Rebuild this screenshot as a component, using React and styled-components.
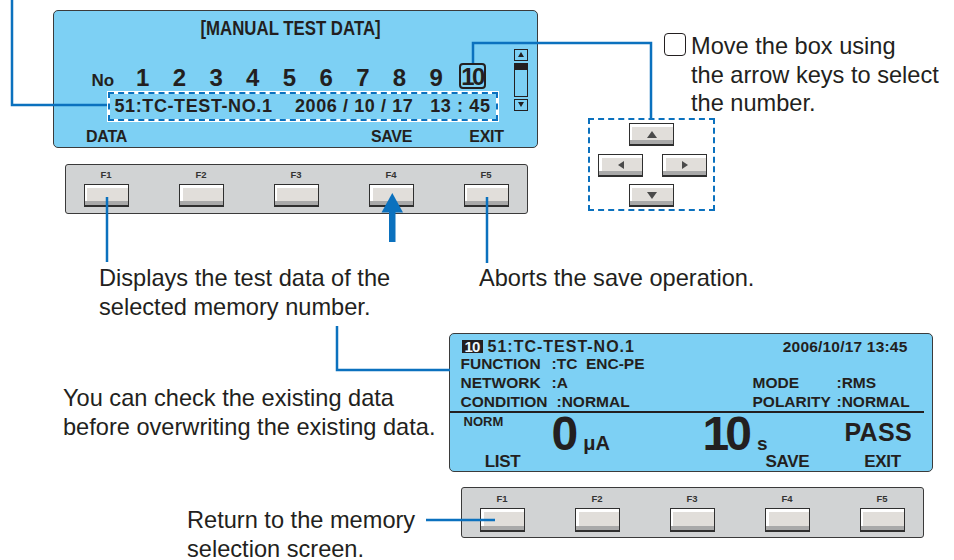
import React from 'react';
import styled, { createGlobalStyle } from 'styled-components';

const BLUE = '#0b71be';
const INK = '#231f20';
const LCD_BG = '#7dd0f4';

const GlobalStyle = createGlobalStyle`
  * { box-sizing: border-box; }
  body {
    margin: 0;
    background: #fff;
  }
`;

const Canvas = styled.div`
  position: relative;
  width: 954px;
  height: 560px;
  overflow: hidden;
  font-family: "Liberation Sans", Arial, sans-serif;
  color: ${INK};
`;

/* ---------- LCD screens ---------- */

const Lcd = styled.div`
  position: absolute;
  background: ${LCD_BG};
  border: 1.5px solid #3b3b3b;
  border-radius: 5px;
  font-weight: 700;
  display: flex;
  flex-direction: column;
`;

const SelectScreen = styled(Lcd)`
  left: 53px;
  top: 10px;
  width: 485px;
  height: 138px;
`;

const ScreenTitle = styled.div`
  height: 34px;
  display: flex;
  justify-content: center;
  padding-right: 10px;
`;

const Condensed = styled.span`
  display: inline-block;
  font-size: ${({ $size }) => $size}px;
  line-height: ${({ $line }) => $line}px;
  transform: scaleX(${({ $scale = 0.82 }) => $scale});
  white-space: pre;
`;

const ScreenBody = styled.div`
  display: flex;
  align-items: flex-start;
  margin-top: 3.5px;
`;

const SelectColumn = styled.div`
  width: 444.5px;
  margin-top: 14px;
`;

const NumberRow = styled.div`
  display: flex;
  height: 26px;
  padding-left: 37.5px;
`;

const NoLabel = styled.span`
  width: 21px;
  font-size: 17px;
  line-height: 36px;
  height: 26px;
`;

const DigitGrid = styled.div`
  display: grid;
  grid-template-columns: repeat(10, 36.7px);
  margin-left: 11.6px;
`;

const Digit = styled.span`
  height: 26px;
  line-height: 30px;
  font-size: 24px;
  text-align: center;
  letter-spacing: -0.5px;
`;

const SelectedDigit = styled.span`
  justify-self: center;
  width: 27px;
  height: 26px;
  border: 2px solid ${INK};
  border-radius: 4px;
  line-height: 23px;
  font-size: 24px;
  text-align: center;
  letter-spacing: -2.5px;
  padding-right: 2px;
`;

const DashedFrame = styled.div`
  margin: 2px 0 0 52.5px;
  width: 392px;
  height: 31px;
  background: #fff;
  padding: 1px;
`;

const DashedInner = styled.div`
  height: 100%;
  border: 2px dashed ${BLUE};
  background: ${LCD_BG};
  background-clip: padding-box;
  display: flex;
  align-items: center;
  justify-content: space-between;
  padding: 1px 5px 0 5px;
  font-size: 18px;
  letter-spacing: 0.6px;
  white-space: pre;
`;

const ScrollBar = styled.div`
  width: 14px;
  margin-left: 15px;
  display: flex;
  flex-direction: column;
  gap: 2px;
`;

const ScrollButton = styled.div`
  height: 12px;
  border: 1.5px solid ${INK};
  display: flex;
  align-items: center;
  justify-content: center;
`;

const ScrollTrack = styled.div`
  height: 34px;
  border: 1.5px solid ${INK};
  border-top-width: 7px;
`;

const Triangle = styled.span`
  width: 0;
  height: 0;
  border-style: solid;
  border-color: transparent;
  ${({ dir, size = 4, color = INK }) => {
    const h = size * 1.5;
    if (dir === 'up') return `border-width: 0 ${size}px ${h}px; border-bottom-color: ${color};`;
    if (dir === 'down') return `border-width: ${h}px ${size}px 0; border-top-color: ${color};`;
    if (dir === 'left') return `border-width: ${size}px ${h}px ${size}px 0; border-right-color: ${color};`;
    return `border-width: ${size}px 0 ${size}px ${h}px; border-left-color: ${color};`;
  }}
`;

const SoftLabels = styled.div`
  display: grid;
  grid-template-columns: repeat(5, 95px);
  margin: ${({ $top = 5 }) => $top}px 0 0 5px;
  line-height: ${({ $line = 20 }) => $line}px;
  font-size: ${({ $size = 16 }) => $size}px;
  letter-spacing: -0.3px;
`;

const SoftLabel = styled.span`
  text-align: center;
`;

/* ---------- memory data screen ---------- */

const DataScreen = styled(Lcd)`
  left: 449px;
  top: 333px;
  width: 484px;
  height: 139px;
  padding-top: 5.5px;
`;

const DataHeader = styled.div`
  display: flex;
  align-items: center;
  height: 14px;
  padding: 0 24.5px 0 11.5px;
  font-size: 15.5px;
`;

const MemoryBadge = styled.span`
  width: 21px;
  height: 13px;
  line-height: 14px;
  font-size: 15px;
  background: ${INK};
  color: #eef8fd;
  text-align: center;
  letter-spacing: -0.8px;
`;

const TestName = styled.span`
  margin-left: 5px;
  font-size: 16px;
  letter-spacing: 1px;
`;

const Stamp = styled.span`
  margin-left: auto;
  letter-spacing: 0.2px;
`;

const InfoGrid = styled.div`
  display: grid;
  grid-template-columns: 91px 201px 84px 1fr;
  padding-left: 10.5px;
  font-size: 15.5px;
  line-height: 19px;
  white-space: pre;
`;

const InfoValue = styled.span`
  margin-left: ${({ $shift = 0 }) => $shift}px;
`;

const Divider = styled.div`
  height: 2px;
  background: ${INK};
  margin-right: 8.5px;
`;

const MeasureRow = styled.div`
  display: grid;
  grid-template-columns: 88px 151px 142px auto;
  height: 42px;
  padding-left: 13.5px;
`;

const ModeTag = styled.span`
  align-self: start;
  margin-top: 1px;
  font-size: 13px;
  line-height: 16px;
`;

const Reading = styled.div`
  align-self: end;
  display: flex;
  align-items: baseline;
`;

const BigValue = styled.span`
  font-size: 48px;
  line-height: 36px;
  letter-spacing: ${({ $tight }) => ($tight ? '-4px' : '0')};
`;

const Unit = styled.span`
  font-size: ${({ $size = 20 }) => $size}px;
  margin-left: ${({ $gap = 5 }) => $gap}px;
`;

const Verdict = styled.span`
  align-self: start;
  margin-top: 6px;
  font-size: 25px;
  line-height: 26px;
  letter-spacing: 0.3px;
`;

/* ---------- function keys ---------- */

const KeyPanel = styled.div`
  position: absolute;
  left: ${({ $x }) => $x}px;
  top: ${({ $y }) => $y}px;
  width: 463px;
  height: ${({ $h }) => $h}px;
  background: #d1d3d4;
  border: 1.5px solid #3a3a3a;
  border-radius: 3px;
`;

const KeyRow = styled.div`
  display: grid;
  grid-template-columns: repeat(5, 95px);
  margin: 0 -7.5px;
`;

const KeyCell = styled.div`
  display: flex;
  flex-direction: column;
  align-items: center;
  padding-top: ${({ $pad }) => $pad}px;
`;

const KeyName = styled.span`
  font-size: 9.5px;
  font-weight: 700;
  line-height: 11px;
  color: #333;
`;

const Key = styled.div`
  width: 45px;
  height: ${({ $h = 23 }) => $h}px;
  margin-top: ${({ $gap = 0 }) => $gap}px;
  border: 1.5px solid #2f2f2f;
  border-bottom-width: 2px;
  background:
    linear-gradient(to right, #fff 2.5px, transparent 2.5px) top left / 100% calc(100% - 4px) no-repeat,
    linear-gradient(to bottom, #fff 0, #fff 3px, #e1deda 3px, #e1deda calc(100% - 4px), #a9a9a9 calc(100% - 4px));
  display: flex;
  align-items: center;
  justify-content: center;
`;

const ArrowPad = styled.div`
  position: absolute;
  left: 588px;
  top: 118px;
  width: 127px;
  height: 93px;
  border: 2px dashed ${BLUE};
  display: flex;
  flex-direction: column;
  align-items: center;
  gap: 7.5px;
  padding-top: 3px;
`;

const ArrowMiddle = styled.div`
  display: flex;
  justify-content: space-between;
  width: 100%;
  padding: 0 6px 0 8px;
`;

/* ---------- captions ---------- */

const Caption = styled.p`
  position: absolute;
  margin: 0;
  font-size: 23.6px;
  line-height: 29px;
  white-space: nowrap;
  color: ${INK};
`;

const DisplaysNote = styled(Caption)`
  left: 99px;
  top: 263.5px;
`;

const AbortsNote = styled(Caption)`
  left: 479px;
  top: 263.5px;
`;

const CheckNote = styled(Caption)`
  left: 63px;
  top: 383.5px;
`;

const ReturnNote = styled(Caption)`
  left: 187px;
  top: 505.5px;
`;

const MoveNote = styled.div`
  position: absolute;
  left: 664px;
  top: 32px;
  display: flex;
  align-items: flex-start;
`;

const BoxMark = styled.span`
  width: 22px;
  height: 23px;
  margin-top: 1px;
  border: 1.5px solid ${INK};
  border-radius: 4px;
  flex: none;
`;

const MoveText = styled.p`
  margin: 0 0 0 5px;
  font-size: 23.6px;
  line-height: 28.5px;
  white-space: nowrap;
`;

const Leaders = styled.svg`
  position: absolute;
  left: 0;
  top: 0;
  pointer-events: none;
`;

const keys = ['F1', 'F2', 'F3', 'F4', 'F5'];

const FunctionKeys = ({ x, y, h, pad, gap, keyH }) => (
  <KeyPanel $x={x} $y={y} $h={h}>
    <KeyRow>
      {keys.map((k) => (
        <KeyCell key={k} $pad={pad}>
          <KeyName>{k}</KeyName>
          <Key $gap={gap} $h={keyH} />
        </KeyCell>
      ))}
    </KeyRow>
  </KeyPanel>
);

const App = () => {
  const digits = [1, 2, 3, 4, 5, 6, 7, 8, 9];

  return (
    <Canvas>
      <GlobalStyle />

      <SelectScreen>
        <ScreenTitle>
          <Condensed $size={21} $line={33} $scale={0.8}>
            [MANUAL TEST DATA]
          </Condensed>
        </ScreenTitle>
        <ScreenBody>
          <SelectColumn>
            <NumberRow>
              <NoLabel>No</NoLabel>
              <DigitGrid>
                {digits.map((d) => (
                  <Digit key={d}>{d}</Digit>
                ))}
                <SelectedDigit>10</SelectedDigit>
              </DigitGrid>
            </NumberRow>
            <DashedFrame>
              <DashedInner>
                <span>51:TC-TEST-NO.1</span>
                <span>{'2006 / 10 / 17   13 : 45'}</span>
              </DashedInner>
            </DashedFrame>
          </SelectColumn>
          <ScrollBar>
            <ScrollButton>
              <Triangle dir="up" size={3.5} />
            </ScrollButton>
            <ScrollTrack />
            <ScrollButton>
              <Triangle dir="down" size={3.5} />
            </ScrollButton>
          </ScrollBar>
        </ScreenBody>
        <SoftLabels>
          <SoftLabel>DATA</SoftLabel>
          <SoftLabel />
          <SoftLabel />
          <SoftLabel>SAVE</SoftLabel>
          <SoftLabel>EXIT</SoftLabel>
        </SoftLabels>
      </SelectScreen>

      <FunctionKeys x={65} y={164} h={50} pad={4} gap={3.5} keyH={23} />

      <MoveNote>
        <BoxMark />
        <MoveText>
          Move the box using
          <br />
          the arrow keys to select
          <br />
          the number.
        </MoveText>
      </MoveNote>

      <ArrowPad>
        <Key>
          <Triangle dir="up" size={5} color="#4a4a4a" />
        </Key>
        <ArrowMiddle>
          <Key>
            <Triangle dir="left" size={4.5} color="#4a4a4a" />
          </Key>
          <Key>
            <Triangle dir="right" size={4.5} color="#4a4a4a" />
          </Key>
        </ArrowMiddle>
        <Key>
          <Triangle dir="down" size={5} color="#4a4a4a" />
        </Key>
      </ArrowPad>

      <DisplaysNote>
        Displays the test data of the
        <br />
        selected memory number.
      </DisplaysNote>
      <AbortsNote>Aborts the save operation.</AbortsNote>
      <CheckNote>
        You can check the existing data
        <br />
        before overwriting the existing data.
      </CheckNote>
      <ReturnNote>
        Return to the memory
        <br />
        selection screen.
      </ReturnNote>

      <DataScreen>
        <DataHeader>
          <MemoryBadge>10</MemoryBadge>
          <TestName>51:TC-TEST-NO.1</TestName>
          <Stamp>2006/10/17 13:45</Stamp>
        </DataHeader>
        <InfoGrid>
          <span>FUNCTION</span>
          <InfoValue>{':TC  ENC-PE'}</InfoValue>
          <span />
          <span />
          <span>NETWORK</span>
          <InfoValue>:A</InfoValue>
          <span>MODE</span>
          <InfoValue>:RMS</InfoValue>
          <span>CONDITION</span>
          <InfoValue $shift={5}>:NORMAL</InfoValue>
          <span>POLARITY</span>
          <InfoValue>:NORMAL</InfoValue>
        </InfoGrid>
        <Divider />
        <MeasureRow>
          <ModeTag>NORM</ModeTag>
          <Reading>
            <BigValue>0</BigValue>
            <Unit $gap={5}>μA</Unit>
          </Reading>
          <Reading>
            <BigValue $tight>10</BigValue>
            <Unit $size={19} $gap={9}>s</Unit>
          </Reading>
          <Verdict>PASS</Verdict>
        </MeasureRow>
        <SoftLabels $top={0} $line={14} $size={17}>
          <SoftLabel>LIST</SoftLabel>
          <SoftLabel />
          <SoftLabel />
          <SoftLabel>SAVE</SoftLabel>
          <SoftLabel>EXIT</SoftLabel>
        </SoftLabels>
      </DataScreen>

      <FunctionKeys x={461} y={487} h={51} pad={4.5} gap={4} keyH={24} />

      <Leaders width="954" height="560" viewBox="0 0 954 560">
        <g fill="none" stroke={BLUE} strokeWidth="2.5">
          <polyline points="12,0 12,105 107,105" />
          <polyline points="473,63 473,43 651,43 651,118" />
          <line x1="107" y1="197" x2="107" y2="262" />
          <line x1="487" y1="197" x2="487" y2="263" />
          <polyline points="337,326 337,370 450,370" />
          <line x1="426" y1="520" x2="495" y2="520" />
        </g>
        <g fill={BLUE}>
          <rect x="389" y="210" width="6.5" height="32" />
          <polygon points="381.5,212.5 392.3,193 403,212.5" />
        </g>
      </Leaders>
    </Canvas>
  );
};

export default App;
